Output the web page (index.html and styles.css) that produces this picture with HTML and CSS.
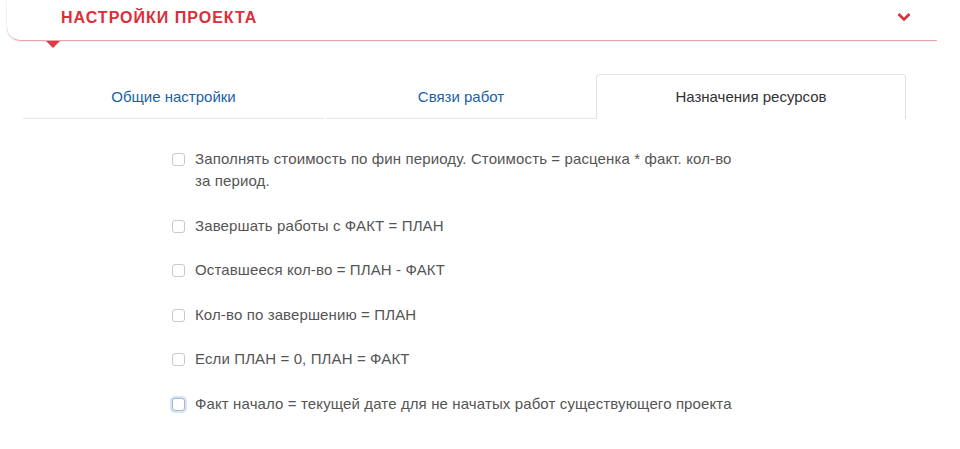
FILE: index.html
```html
<!DOCTYPE html>
<html lang="ru">
<head>
<meta charset="utf-8">
<link rel="stylesheet" href="styles.css">
</head>
<body>
<div class="panel">
  <div class="panel-head">
    <span class="title">НАСТРОЙКИ ПРОЕКТА</span>
    <svg class="chev" width="14" height="10" viewBox="0 0 14 10"><path d="M1.5 2 L7 7.5 L12.5 2" fill="none" stroke="#d9303a" stroke-width="2.6"/></svg>
    <span class="pointer"></span>
  </div>
  <div class="tabs">
    <div class="tab t1">Общие настройки</div>
    <div class="tab t2">Связи работ</div>
    <div class="tab t3 active">Назначения ресурсов</div>
  </div>
  <div class="opts">
    <label class="opt"><span class="cb"></span><span class="txt">Заполнять стоимость по фин периоду. Стоимость = расценка * факт. кол-во<br>за период.</span></label>
    <label class="opt"><span class="cb"></span><span class="txt">Завершать работы с ФАКТ = ПЛАН</span></label>
    <label class="opt"><span class="cb"></span><span class="txt">Оставшееся кол-во = ПЛАН - ФАКТ</span></label>
    <label class="opt"><span class="cb"></span><span class="txt">Кол-во по завершению = ПЛАН</span></label>
    <label class="opt"><span class="cb"></span><span class="txt">Если ПЛАН = 0, ПЛАН = ФАКТ</span></label>
    <label class="opt"><span class="cb focus"></span><span class="txt">Факт начало = текущей дате для не начатых работ существующего проекта</span></label>
  </div>
</div>
</body>
</html>
```
FILE: styles.css
```css
html, body { margin: 0; padding: 0; background: #fff; }
body { font-family: "Liberation Sans", Arial, sans-serif; width: 960px; height: 449px; overflow: hidden; }
.panel { padding: 0; }
.panel-head {
  position: relative;
  margin: 0 23px 0 7px;
  height: 40px;
  border-bottom: 1.5px solid #e9a6aa;
  border-bottom-left-radius: 14px;
  box-shadow: -1px 1px 1px 0 rgba(0,0,0,0.06);
  display: flex;
  align-items: flex-start;
  justify-content: space-between;
}
.title {
  margin: 9px 0 0 54px;
  font-size: 16px;
  font-weight: bold;
  color: #d9303a;
  letter-spacing: 1px;
}
.chev { margin: 12px 26px 0 0; }
.pointer {
  position: absolute;
  left: 39px;
  top: 41px;
  width: 0; height: 0;
  border-left: 7px solid transparent;
  border-right: 7px solid transparent;
  border-top: 7px solid #dc3d45;
}
.tabs {
  display: flex;
  margin: 33px 54px 0 23px;
  height: 45px;
}
.tab {
  box-sizing: border-box;
  font-size: 15px;
  color: #1b5fa5;
  text-align: center;
  padding-top: 14px;
  border-bottom: 1.5px solid #e6e6e6;
}
.t1 { width: 301px; margin-right: 2px; }
.t2 { width: 270px; }
.t3 { width: 310px; }
.tab.active {
  color: #333;
  border: 1.5px solid #e2e2e2;
  border-bottom: none;
  border-radius: 4px 4px 0 0;
  padding-top: 13px;
}
.opts {
  display: flex;
  flex-direction: column;
  margin: 29px 0 0 172px;
  gap: 22.6px;
}
.opt { display: flex; align-items: flex-start; font-size: 15px; color: #555; line-height: 22px; letter-spacing: 0.12px; }
.cb {
  box-sizing: border-box;
  width: 13px; height: 13px;
  margin-top: 5px;
  margin-right: 10px;
  border: 1px solid #c9c9c9;
  border-radius: 3px;
  background: #fff;
  flex: none;
}
.cb.focus { border-color: #a9b7c8; box-shadow: 0 0 0 2px #d6e4f7; }
```
